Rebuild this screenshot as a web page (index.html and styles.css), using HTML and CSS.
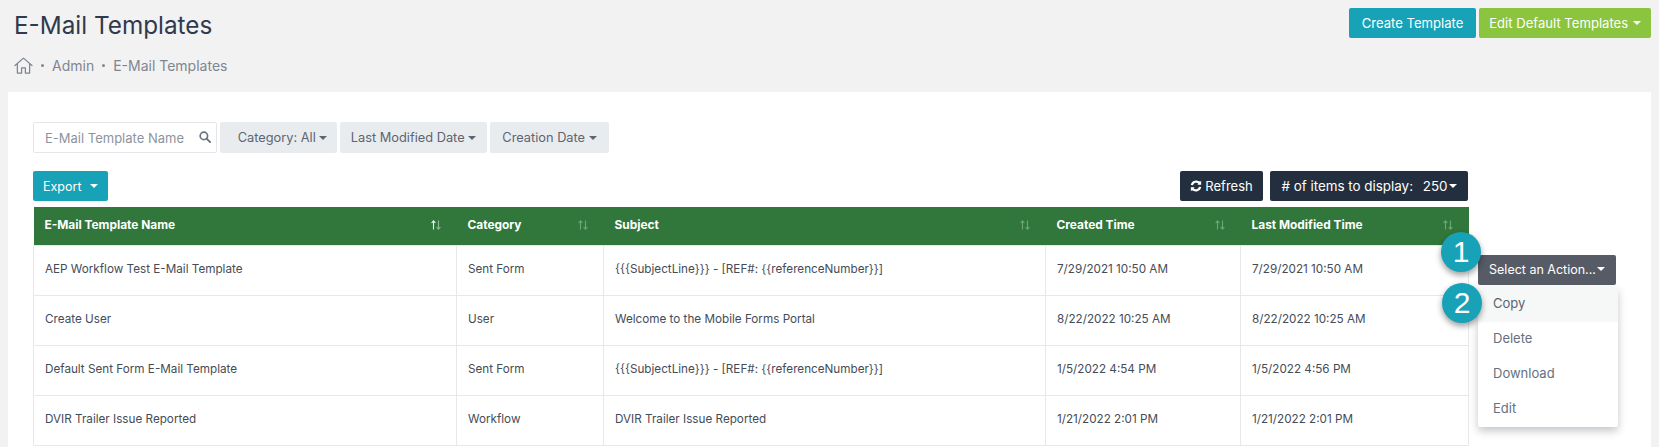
FILE: index.html
```html
<!DOCTYPE html>
<html lang="en">
<head>
<meta charset="utf-8">
<title>E-Mail Templates</title>
<link rel="stylesheet" href="styles.css">
</head>
<body>
<svg class="defs" width="0" height="0" aria-hidden="true">
  <symbol id="sort-up" viewBox="0 0 5 10"><path d="M2.500 9.500V1M.6 3 2.500 .8 4.400 3" fill="none" stroke="currentColor" stroke-width="1.100"/></symbol>
  <symbol id="sort-down" viewBox="0 0 5 10"><path d="M2.500 .5V9M.6 7 2.500 9.200 4.400 7" fill="none" stroke="currentColor" stroke-width="1.100"/></symbol>
</svg>
<header class="page-head">
  <div class="head-left">
    <h1 class="title">E-Mail Templates</h1>
    <nav class="crumbs">
      <svg class="home" viewBox="0 0 20 18" width="19" height="17" aria-hidden="true"><path d="M1 9 10 1.200 19 9M3.500 7.200V17H8v-5.500h4V17h4.500V7.200" fill="none" stroke="#7e8590" stroke-width="1.300" stroke-linejoin="round" stroke-linecap="round"/></svg>
      <i class="dot"></i><span>Admin</span><i class="dot"></i><span>E-Mail Templates</span>
    </nav>
  </div>
  <div class="head-actions">
    <button class="btn btn-teal">Create Template</button>
    <button class="btn btn-green">Edit Default Templates <b class="caret"></b></button>
  </div>
</header>
<main class="card">
  <div class="filters">
    <div class="search">
      <span class="placeholder">E-Mail Template Name</span>
      <svg viewBox="0 0 14 14" width="12" height="12" aria-hidden="true"><circle cx="5.700" cy="5.700" r="4.300" fill="none" stroke="#6c7480" stroke-width="2"/><path d="M9 9l4 4" stroke="#6c7480" stroke-width="2.200" stroke-linecap="round"/></svg>
    </div>
    <button class="btn btn-filter w-cat">Category: All <b class="caret"></b></button>
    <button class="btn btn-filter w-mod">Last Modified Date <b class="caret"></b></button>
    <button class="btn btn-filter w-cre">Creation Date <b class="caret"></b></button>
  </div>
  <div class="toolbar">
    <button class="btn btn-teal export">Export <b class="caret"></b></button>
    <div class="toolbar-right">
      <button class="btn btn-dark refresh"><svg class="refresh-icon" viewBox="0 0 14 14" width="12" height="12" aria-hidden="true"><path d="M2.200 6A5 5 0 0 1 10.800 3.500L12 2.300M11.800 8A5 5 0 0 1 3.200 10.500L2 11.700" fill="none" stroke="#fff" stroke-width="2.600"/><path d="M13 1v4.500H8.500zM1 13V8.500h4.500z" fill="#fff"/></svg>Refresh</button>
      <button class="btn btn-dark items"># of items to display: <span class="count">250</span> <b class="caret"></b></button>
    </div>
  </div>
  <div class="table-wrap">
    <table class="grid">
      <colgroup><col class="c1"><col class="c2"><col class="c3"><col class="c4"><col class="c5"></colgroup>
      <thead>
        <tr>
          <th><div class="th-in">E-Mail Template Name<span class="sort on"><svg class="up"><use href="#sort-up"/></svg><svg class="down"><use href="#sort-down"/></svg></span></div></th>
          <th><div class="th-in">Category<span class="sort"><svg><use href="#sort-up"/></svg><svg><use href="#sort-down"/></svg></span></div></th>
          <th><div class="th-in">Subject<span class="sort"><svg><use href="#sort-up"/></svg><svg><use href="#sort-down"/></svg></span></div></th>
          <th><div class="th-in">Created Time<span class="sort"><svg><use href="#sort-up"/></svg><svg><use href="#sort-down"/></svg></span></div></th>
          <th><div class="th-in">Last Modified Time<span class="sort"><svg><use href="#sort-up"/></svg><svg><use href="#sort-down"/></svg></span></div></th>
        </tr>
      </thead>
      <tbody>
        <tr><td>AEP Workflow Test E-Mail Template</td><td>Sent Form</td><td>{{{SubjectLine}}} - [REF#: {{referenceNumber}}]</td><td>7/29/2021 10:50 AM</td><td>7/29/2021 10:50 AM</td></tr>
        <tr><td>Create User</td><td>User</td><td>Welcome to the Mobile Forms Portal</td><td>8/22/2022 10:25 AM</td><td>8/22/2022 10:25 AM</td></tr>
        <tr><td>Default Sent Form E-Mail Template</td><td>Sent Form</td><td>{{{SubjectLine}}} - [REF#: {{referenceNumber}}]</td><td>1/5/2022 4:54 PM</td><td>1/5/2022 4:56 PM</td></tr>
        <tr><td>DVIR Trailer Issue Reported</td><td>Workflow</td><td>DVIR Trailer Issue Reported</td><td>1/21/2022 2:01 PM</td><td>1/21/2022 2:01 PM</td></tr>
      </tbody>
    </table>
    <div class="action">
      <button class="btn btn-action">Select an Action...<b class="caret"></b></button>
      <ul class="menu">
        <li class="hover">Copy</li>
        <li>Delete</li>
        <li>Download</li>
        <li>Edit</li>
      </ul>
    </div>
    <span class="badge b1">1</span>
    <span class="badge b2">2</span>
  </div>
</main>
</body>
</html>
```
FILE: styles.css
```css
* { box-sizing: border-box; }
html, body { height: 100%; }
body {
  margin: 0;
  height: 447px;
  overflow: hidden;
  background: #f2f2f2;
  color: #3f4754;
  font-family: Inter, "Open Sans", sans-serif;
  font-size: 12px;
}
.defs { position: absolute; }
.page-head {
  display: flex;
  justify-content: space-between;
  height: 92px;
  padding: 8px 8px 0 14px;
}
.title {
  margin: 0;
  font-size: 24.300px;
  line-height: 34px;
  font-weight: 400;
  color: #2f3a4c;
}
.crumbs {
  display: flex;
  align-items: center;
  gap: 8px;
  margin-top: 14px;
  height: 18px;
  color: #7f8690;
  font-size: 14px;
}
.dot { width: 3px; height: 3px; border-radius: 50%; background: #7f8690; }
.head-actions { display: flex; gap: 3px; }
.btn {
  display: inline-flex;
  align-items: center;
  justify-content: center;
  height: 30px;
  border: 0;
  border-radius: 2px;
  padding: 0 10px;
  font: inherit;
  font-size: 12.500px;
  color: #fff;
  white-space: pre;
}
.caret {
  display: inline-block;
  margin-left: 1px;
  border-left: 4px solid transparent;
  border-right: 4px solid transparent;
  border-top: 4px solid currentColor;
}
.btn-teal { background: #17a2b8; width: 127px; }
.btn-green { background: #8bc53f; width: 172px; }
.head-actions .btn { font-size: 13.100px; }
.card {
  height: 355px;
  margin: 0 8px;
  padding: 30px 25px 0;
  background: #fff;
}
.filters { display: flex; gap: 3px; height: 31px; }
.search {
  display: flex;
  align-items: center;
  justify-content: space-between;
  width: 184px;
  padding: 0 5px 0 11px;
  border: 1px solid #e4e6e9;
  border-radius: 2px;
  color: #8d949e;
  font-size: 13px;
}
.search svg { margin-bottom: 2px; }
.btn-filter { height: 31px; background: #e9ecef; color: #5d6570; font-size: 12.800px; }
.btn-filter .caret { margin-left: 0; }
.w-cat { width: 117px; padding-left: 14px; padding-right: 6px; }
.w-mod { width: 147px; }
.w-cre { width: 119px; }
.toolbar {
  display: flex;
  justify-content: space-between;
  width: 1435px;
  margin-top: 18px;
}
.export { width: 75px; }
.export .caret { margin-left: 5px; }
.toolbar-right { display: flex; gap: 7px; }
.btn-dark { background: #232f3e; font-size: 13px; }
.refresh { width: 83px; }
.refresh-icon { flex: none; margin-right: 3px; }
.items { width: 198px; font-size: 13.400px; padding: 0; }
.count { margin-left: 6px; }
.table-wrap { position: relative; margin-top: 6px; }
.grid {
  width: 1435px;
  table-layout: fixed;
  border-collapse: collapse;
}
.c1 { width: 423px; }
.c2 { width: 147px; }
.c3 { width: 442px; }
.c4 { width: 195px; }
.c5 { width: 228px; }
.grid th {
  height: 38px;
  padding: 0 16px 2px 11px;
  background: #31773b;
  color: #fff;
  font-size: 11.900px;
  font-weight: 700;
  text-align: left;
}
.th-in { display: flex; justify-content: space-between; align-items: center; }
.sort { display: inline-flex; color: #6fa578; }
.sort svg { width: 5px; height: 10px; display: block; }
.sort .up { color: #e9f3eb; }
.sort .down { color: #8fb896; }
.grid td {
  height: 50px;
  padding: 0 11px 3px;
  border: 1px solid #e7e8ea;
  color: #454c57;
  font-size: 11.700px;
  white-space: nowrap;
}
.action { position: absolute; left: 1445px; top: 48px; width: 140px; }
.btn-action { width: 138px; background: #565b65; padding: 0 0 2px; }
.menu {
  margin: 2px 0 0;
  padding: 0;
  list-style: none;
  background: #fff;
  box-shadow: 0 4px 9px rgba(40, 50, 60, .28);
  border-radius: 2px;
}
.menu li {
  height: 35px;
  padding: 0 15px 2px;
  line-height: 33px;
  font-size: 13px;
  color: #66707f;
}
.menu li.hover { background: #f6f7f7; color: #5a6370; }
.badge {
  position: absolute;
  display: flex;
  align-items: center;
  justify-content: center;
  width: 40px;
  height: 40px;
  border-radius: 50%;
  background: #17a2b8;
  color: #fff;
  font-family: "Liberation Sans", Arial, sans-serif;
  font-size: 30px;
  box-shadow: 0 3px 6px rgba(0, 0, 0, .4);
}
.b1 { left: 1408px; top: 25px; }
.b2 { left: 1409px; top: 76px; }
```
